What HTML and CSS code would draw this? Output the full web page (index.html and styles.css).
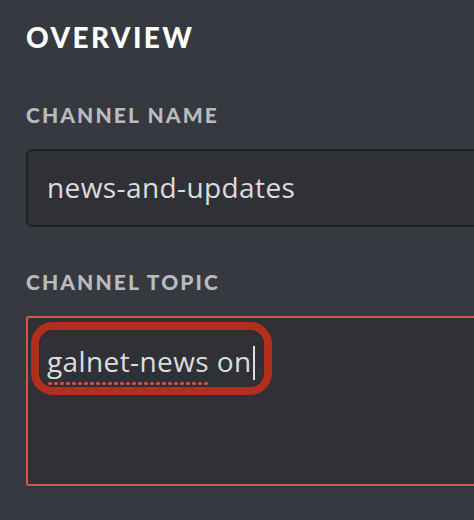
FILE: index.html
```html
<!DOCTYPE html>
<html>
<head>
<meta charset="utf-8">
<link rel="stylesheet" href="styles.css">
</head>
<body>
<div class="page">
  <h1 class="title">OVERVIEW</h1>
  <div class="field">
    <div class="label">CHANNEL NAME</div>
    <div class="input name-input">news-and-updates</div>
  </div>
  <div class="field topic-field">
    <div class="label">CHANNEL TOPIC</div>
    <div class="input topic-input">
      <span class="misspelled">galnet-news</span> on<span class="caret"></span>
      <div class="annotation"></div>
    </div>
  </div>
</div>
</body>
</html>
```

FILE: styles.css
```css
html, body {
  margin: 0;
  padding: 0;
  background: #36393f;
  overflow: hidden;
  width: 474px;
  height: 520px;
}
.page {
  padding: 23px 0 0 26px;
  font-family: Lato, "Open Sans", sans-serif;
  width: 600px;
}
.title {
  margin: 0;
  font-size: 28px;
  line-height: 28px;
  font-weight: 900;
  color: #ffffff;
  letter-spacing: 2.4px;
}
.field {
  margin-top: 53px;
}
.topic-field {
  margin-top: 44px;
}
.label {
  font-size: 21px;
  line-height: 21px;
  font-weight: 900;
  color: #b9bbbe;
  letter-spacing: 2.1px;
  margin-bottom: 24px;
}
.input {
  box-sizing: border-box;
  background: #303136;
  border: 2px solid #202225;
  border-radius: 6px;
  color: #dcddde;
  font-family: "Open Sans", Lato, sans-serif;
  font-size: 28px;
  line-height: 28px;
  letter-spacing: 0.4px;
  padding: 22px 19px;
  width: 600px;
}
.name-input {
  height: 78px;
}
.topic-input {
  position: relative;
  height: 170px;
  border: 2px solid #d4574d;
  border-radius: 3px;
  padding-top: 28px;
  box-shadow: 0 3px 0 -1px #2c3440;
}
.misspelled {
  background-image: radial-gradient(circle, #e5474a 1.6px, transparent 2px);
  background-size: 6px 5px;
  background-repeat: repeat-x;
  background-position: 0 100%;
  padding-bottom: 6px;
}
.caret {
  display: inline-block;
  width: 2px;
  height: 34px;
  background: #dcddde;
  vertical-align: -8px;
  margin-left: 1px;
}
.annotation {
  position: absolute;
  left: 3px;
  top: 4px;
  width: 241px;
  height: 73px;
  box-sizing: border-box;
  border: 8px solid #b12f1c;
  border-radius: 22px;
  box-shadow: inset 0 0 0 1px #2a2c30;
  pointer-events: none;
}
```
